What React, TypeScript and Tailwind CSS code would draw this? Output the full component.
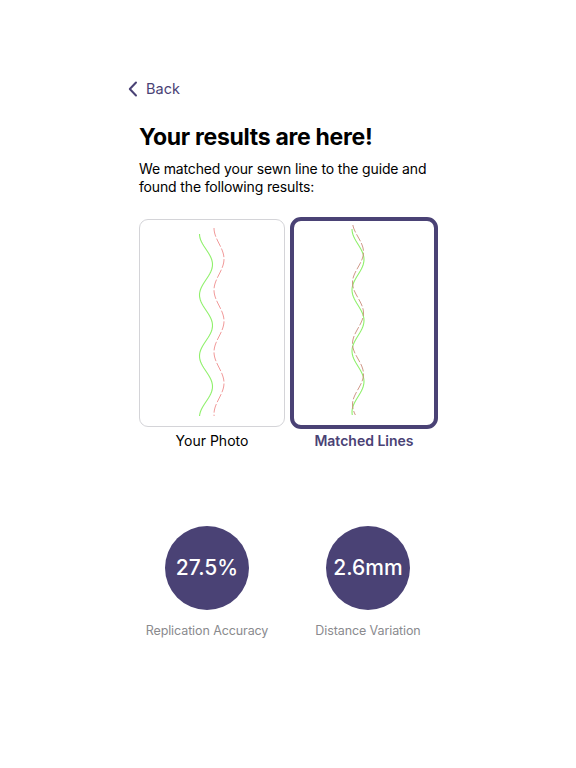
const font = { fontFamily: 'Inter, "Liberation Sans", sans-serif' };

function wave(x0: number, amp: number, y0: number, y1: number, phase: number, period: number) {
  const pts: string[] = [];
  for (let y = y0; y <= y1; y += 2) {
    const x = x0 + amp * Math.sin(((y - y0) / period) * Math.PI * 2 + phase);
    pts.push(`${x.toFixed(2)},${y}`);
  }
  return 'M' + pts.join(' L');
}

function PhotoCard() {
  return (
    <div className="mt-[2px] h-[208px] w-[146px] rounded-[9px] border border-[#d4d4d8] bg-white">
      <svg width="144" height="206" viewBox="0 0 144 206">
        <path d={wave(66, 6.5, 14, 196, -Math.PI / 2, 61)} fill="none" stroke="#90f06c" strokeWidth="1.1" />
        <path
          d={wave(79, 5, 8, 196, -Math.PI / 2, 62)}
          fill="none"
          stroke="#f19a9a"
          strokeWidth="1"
          strokeDasharray="9 2"
        />
      </svg>
    </div>
  );
}

function MatchedCard() {
  return (
    <div className="h-[212px] w-[148px] rounded-[11px] border-[4px] border-[#4a4275] bg-white">
      <svg width="140" height="204" viewBox="0 0 140 204">
        <path d={wave(64, 6, 8, 194, -Math.PI / 2, 61)} fill="none" stroke="#90f06c" strokeWidth="1.1" />
        <path
          d={wave(64, 5.5, 4, 194, -Math.PI / 2 + 0.35, 61)}
          fill="none"
          stroke="#c98c7a"
          strokeWidth="0.9"
          strokeDasharray="8 2"
        />
      </svg>
    </div>
  );
}

function Stat({ value, label }: { value: string; label: string }) {
  return (
    <div className="flex w-[140px] flex-col items-center">
      <div className="flex h-[84px] w-[84px] items-center justify-center rounded-full bg-[#4a4275]">
        <span className="text-[21px] font-medium text-white">{value}</span>
      </div>
      <span className="mt-[12px] text-[12.5px] tracking-[-0.1px] text-[#8a8a8e]">{label}</span>
    </div>
  );
}

export default function App() {
  return (
    <div className="min-h-[768px] w-full bg-white" style={font}>
      <div className="w-[439px] pl-[139px] pt-[77px]">
        <button className="-ml-[11px] flex h-[24px] items-center gap-[8px] text-[14.5px] text-[#4a4275]">
          <svg width="10" height="16" viewBox="0 0 10 16" fill="none">
            <path d="M8 1.5 L1.8 8 L8 14.5" stroke="#4a4275" strokeWidth="2" strokeLinecap="round" strokeLinejoin="round" />
          </svg>
          <span>Back</span>
        </button>

        <h1 className="mt-[22px] text-[23px] font-bold leading-[28px] tracking-[-0.3px] text-black">
          Your results are here!
        </h1>
        <p className="mt-[9px] text-[14px] leading-[18px] tracking-[-0.15px] text-black">
          We matched your sewn line to the guide and found the following results:
        </p>

        <div className="mt-[21px] flex gap-[5px]">
          <PhotoCard />
          <MatchedCard />
        </div>
        <div className="mt-[2px] flex gap-[5px] text-[14px] leading-[20px]">
          <span className="w-[146px] text-center text-black">Your Photo</span>
          <span className="w-[148px] text-center font-semibold text-[#4a4275]">Matched Lines</span>
        </div>

        <div className="mt-[75px] -ml-[2px] flex gap-[21px]">
          <Stat value="27.5%" label="Replication Accuracy" />
          <Stat value="2.6mm" label="Distance Variation" />
        </div>
      </div>
    </div>
  );
}
